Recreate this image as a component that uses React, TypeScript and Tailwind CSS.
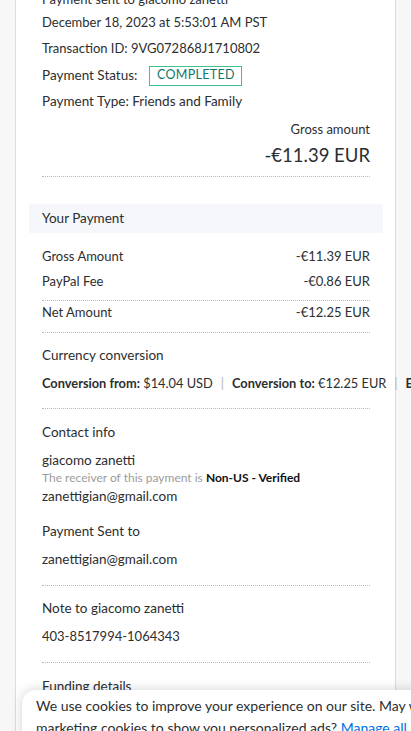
import React from "react";

const font = { fontFamily: "Lato, 'Open Sans', sans-serif" };

function Dots() {
  return <div className="border-t border-dotted border-[#b9b9b9]" />;
}

export default function App() {
  return (
    <div
      className="relative w-[411px] h-[731px] overflow-hidden bg-[#f7f7f7] text-[#2c2e2f]"
      style={font}
    >
      <div className="ml-[15px] w-[381px] min-h-[800px] border-x border-[#dcdcdc] bg-white mt-[-11px]">
        <div className="pl-[26px] pr-[25px]">
          <div className="leading-[20px] text-[13px]">Payment sent to giacomo zanetti</div>
          <div className="mt-[1px] text-[13px]">
            <div className="h-[26px] flex items-center">December 18, 2023 at 5:53:01 AM PST</div>
            <div className="h-[26px] flex items-center">Transaction ID: 9VG072868J1710802</div>
            <div className="h-[26px] flex items-center pt-[1px]">
              <span className="text-[13.5px]">Payment Status:</span>
              <span className="ml-[12px] h-[20px] w-[93px] flex items-center justify-center border border-[#3cc391] text-[#11766a] text-[12.5px] tracking-[0.3px]">
                COMPLETED
              </span>
            </div>
            <div className="h-[26px] flex items-center text-[13.5px]">Payment Type: Friends and Family</div>
          </div>
          <div className="mt-[5px] text-right leading-[20px] text-[13px]">Gross amount</div>
          <div className="mt-[4px] text-right leading-[24px] text-[18.5px]">-€11.39 EUR</div>
          <div className="mt-[9px]">
            <Dots />
          </div>
        </div>

        <div className="mt-[27px] ml-[13px] mr-[12px] h-[29px] bg-[#f5f7fa] pl-[13px] flex items-center text-[13.5px]">
          Your Payment
        </div>

        <div className="pl-[26px] pr-[25px] text-[13px]">
          <div className="mt-[11px] h-[25px] flex items-center justify-between">
            <span>Gross Amount</span>
            <span>-€11.39 EUR</span>
          </div>
          <div className="h-[25px] flex items-center justify-between">
            <span>PayPal Fee</span>
            <span>-€0.86 EUR</span>
          </div>
          <div className="mt-[6px]">
            <Dots />
          </div>
          <div className="h-[24px] flex items-center justify-between">
            <span>Net Amount</span>
            <span>-€12.25 EUR</span>
          </div>
          <div className="mt-[7px]">
            <Dots />
          </div>

          <div className="mt-[12px] leading-[20px] text-[13.5px]">Currency conversion</div>
          <div className="mt-[8px] leading-[20px] whitespace-nowrap text-[12.8px]">
            <span className="font-bold">Conversion from:</span> $14.04 USD
            <span className="text-[#b4b4b4] mx-[8px]">|</span>
            <span className="font-bold">Conversion to:</span> €12.25 EUR
            <span className="text-[#b4b4b4] mx-[8px]">|</span>
            <span className="font-bold">Exchange rate:</span> 1 EUR = 1.146 USD
          </div>
          <div className="mt-[15px]">
            <Dots />
          </div>

          <div className="mt-[13px] leading-[20px] text-[13.5px]">Contact info</div>
          <div className="mt-[8px] leading-[20px] text-[13.5px]">giacomo zanetti</div>
          <div className="leading-[16px] text-[12px] text-[#9c9c9c]">
            The receiver of this payment is{" "}
            <span className="font-bold text-[#111]">Non-US - Verified</span>
          </div>
          <div className="leading-[20px] text-[13.5px]">zanettigian@gmail.com</div>

          <div className="mt-[15px] leading-[20px] text-[13.5px]">Payment Sent to</div>
          <div className="mt-[8px] leading-[20px] text-[13.5px]">zanettigian@gmail.com</div>
          <div className="mt-[16px]">
            <Dots />
          </div>

          <div className="mt-[12px] leading-[20px] text-[13.5px]">Note to giacomo zanetti</div>
          <div className="mt-[8px] leading-[20px] text-[13px]">403-8517994-1064343</div>
          <div className="mt-[16px]">
            <Dots />
          </div>

          <div className="mt-[13px] leading-[20px] text-[13.5px]">Funding details</div>
        </div>
      </div>

      <div className="absolute left-[22px] top-[690px] w-[420px] h-[80px] bg-white rounded-tl-[14px] shadow-[0_0_12px_rgba(0,0,0,0.18)] pl-[14px] pt-[5px] text-[14px] leading-[22px] whitespace-nowrap text-[#2c2e2f]">
        <div>We use cookies to improve your experience on our site. May we use</div>
        <div>
          marketing cookies to show you personalized ads?{" "}
          <span className="text-[#0070e0] underline">Manage all cookies</span>
        </div>
      </div>
    </div>
  );
}
